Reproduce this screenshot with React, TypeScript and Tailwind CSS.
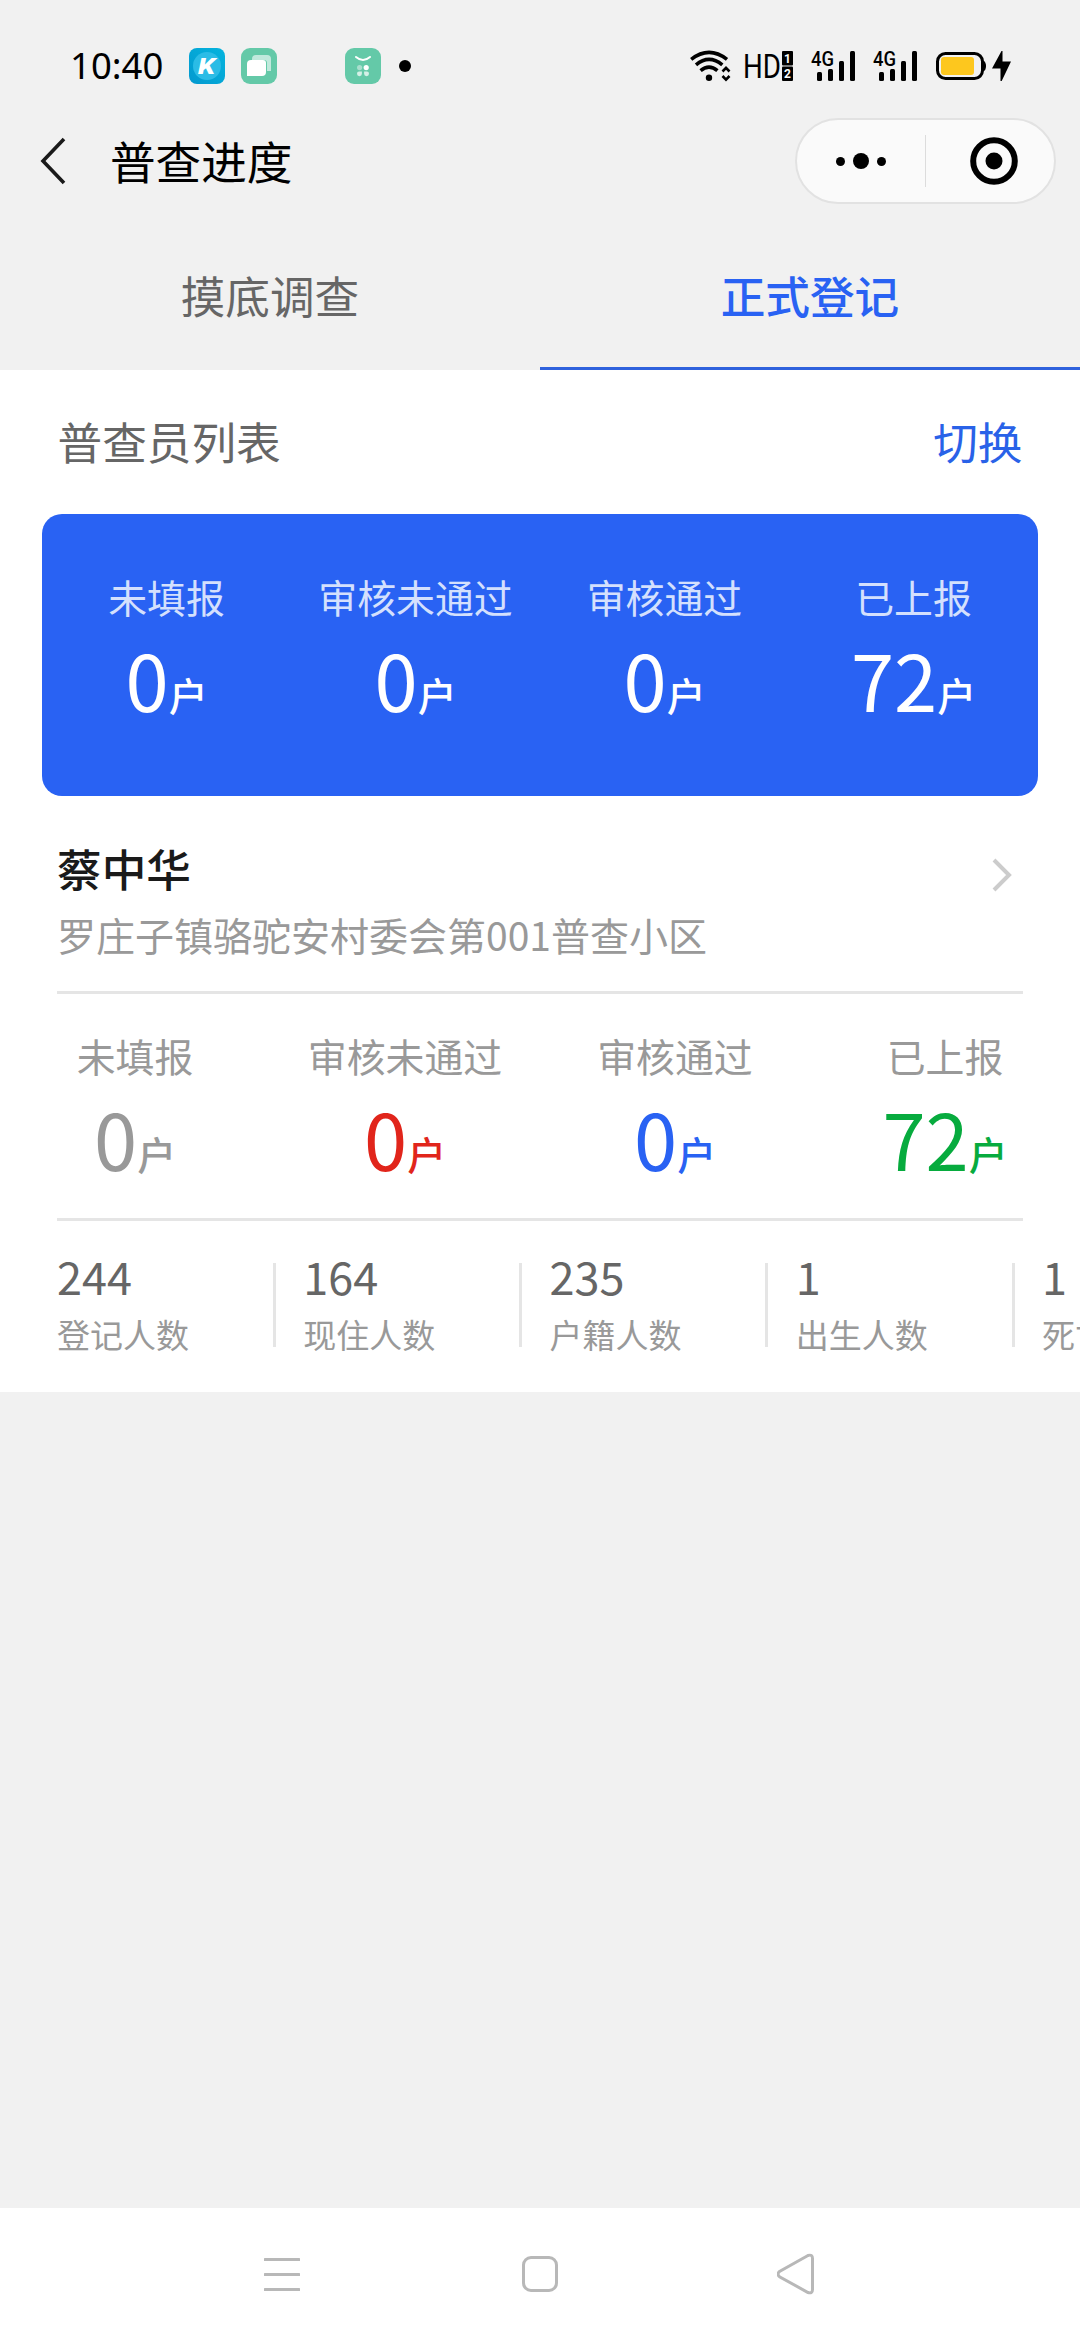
import clsx from "clsx";

const householdStats = [
  { label: "未填报", value: 0, color: "text-[#999999]" },
  { label: "审核未通过", value: 0, color: "text-[#e1251b]" },
  { label: "审核通过", value: 0, color: "text-[#2962f3]" },
  { label: "已上报", value: 72, color: "text-[#07ab3e]" },
];

const peopleStats = [
  { label: "登记人数", value: 244 },
  { label: "现住人数", value: 164 },
  { label: "户籍人数", value: 235 },
  { label: "出生人数", value: 1 },
  { label: "死亡人数", value: 1 },
];

function SignalIcon() {
  return (
    <svg className="overflow-visible" width="46" height="32" viewBox="0 0 46 32">
      <text x="0" y="15.5" fontSize="20.5" fontFamily="Roboto" fontWeight="500" textLength="23" lengthAdjust="spacingAndGlyphs">4G</text>
      <rect x="6" y="22" width="5" height="9" rx="1.5" />
      <rect x="17" y="19" width="5" height="12" rx="1.5" />
      <rect x="28" y="11" width="5" height="20" rx="1.5" />
      <rect x="39" y="1" width="5" height="30" rx="1.5" />
    </svg>
  );
}

function StatusBar() {
  return (
    <div className="flex h-[118px] items-center pt-[14px] pl-[70px] pr-[67px]">
      <span className="w-[119px] pb-[2px] font-['Noto_Sans',sans-serif] text-[36.5px] leading-none text-black">10:40</span>

      {/* Notification icons */}
      <svg width="36" height="36" viewBox="0 0 36 36">
        <defs>
          <linearGradient id="kBg" x1="0" y1="1" x2="1" y2="0">
            <stop offset="0" stopColor="#0399cf" />
            <stop offset="1" stopColor="#05b4de" />
          </linearGradient>
        </defs>
        <rect width="36" height="36" rx="8" fill="url(#kBg)" />
        <circle cx="18" cy="18" r="14" fill="#2bbce6" />
        <text x="9" y="26" fontSize="22" fontFamily="Roboto" fontWeight="900" fontStyle="italic" fill="#fff" textLength="17" lengthAdjust="spacingAndGlyphs">K</text>
      </svg>
      <svg className="ml-4" width="36" height="36" viewBox="0 0 36 36">
        <rect width="36" height="36" rx="9" fill="#64c9a8" />
        <path d="M11 11a4 4 0 0 1 4-4h11a4 4 0 0 1 4 4v12h-4V15a3 3 0 0 0-3-3H11z" fill="#c0e9dc" />
        <path d="M6 16a4 4 0 0 1 4-4h12a3 3 0 0 1 3 3v9a4 4 0 0 1-4 4H6z" fill="#fff" />
      </svg>
      <svg className="ml-[68px]" width="36" height="36" viewBox="0 0 36 36">
        <rect width="36" height="36" rx="9" fill="#64c9a8" />
        <path d="M11 9q7 6 14 0" fill="none" stroke="#fff" strokeWidth="2" strokeLinecap="round" />
        <circle cx="14.6" cy="19.6" r="2.6" fill="#a9dfce" />
        <circle cx="21.2" cy="19.6" r="2.6" fill="#fff" />
        <path d="M12 25.8a2.3 2.3 0 0 1 2.6-2.3h2.3v2.3a2.4 2.4 0 0 1-4.9 0z" fill="#d5f0e7" />
        <path d="M24 25.8a2.3 2.3 0 0 0-2.6-2.3h-2.3v2.3a2.4 2.4 0 0 0 4.9 0z" fill="#d5f0e7" />
      </svg>
      <span className="ml-[18px] size-3 rounded-full bg-black" />

      {/* System icons */}
      <div className="ml-auto flex items-center">
        <svg width="42" height="32" viewBox="0 0 42 32">
          <g fill="none" stroke="#000" strokeWidth="3.6">
            <path d="M1.2 9.3Q19-4.6 37 9.3" />
            <path d="M6 14.8Q19 3.9 32.3 14.8" />
            <path d="M10.6 20.6Q19 13.6 27.4 20.6" />
          </g>
          <circle cx="19" cy="27.8" r="3.2" />
          <path d="M32.5 21.5l3.5-3.7 3.5 3.7M32.5 26l3.5 3.7L39.5 26" fill="none" stroke="#000" strokeWidth="2.6" />
        </svg>
        <svg className="ml-3 overflow-visible" width="50" height="32" viewBox="0 0 50 32">
          <text x="-1" y="28" fontSize="33.5" fontFamily="Roboto" textLength="38" lengthAdjust="spacingAndGlyphs">HD</text>
          <rect x="38" y="1" width="11" height="14.5" rx="1" />
          <rect x="38" y="16.5" width="11" height="14.5" rx="1" />
          <text x="43.5" y="12.5" fontSize="12" fontFamily="Roboto" fontWeight="700" fill="#fff" textAnchor="middle">1</text>
          <text x="43.5" y="28" fontSize="12" fontFamily="Roboto" fontWeight="700" fill="#fff" textAnchor="middle">2</text>
        </svg>
        <div className="ml-[17px] flex gap-4">
          <SignalIcon />
          <SignalIcon />
        </div>
        <svg className="ml-[17px]" width="77" height="32" viewBox="0 0 77 32">
          <rect x="1.5" y="3.5" width="45" height="25" rx="8" fill="none" stroke="#000" strokeWidth="3" />
          <path d="M47.5 10.5q2.5 1.5 2.5 5.5t-2.5 5.5z" />
          <rect x="5" y="7" width="33" height="18" rx="3" fill="#fdc71e" />
          <path d="M65.5 1L56 18.5h8.5V31h1.2L75 11.5h-8.5V1z" />
        </svg>
      </div>
    </div>
  );
}

function NavBar() {
  return (
    <div className="flex h-[86px] items-center justify-between pr-6 pl-10">
      <div className="flex items-center">
        <svg width="26" height="48" viewBox="0 0 26 48" fill="none" stroke="#1a1a1a" strokeWidth="3.6">
          <path d="M24 2L3 24l21 22" />
        </svg>
        <h1 className="ml-11 pb-[2px] text-[45.6px] leading-[70px] text-black">普查进度</h1>
      </div>
      <div className="flex h-[86px] w-[261px] items-center rounded-full border-2 border-[#e2e2e2] bg-[#fafafa]">
        <div className="flex h-[52px] w-[129px] items-center justify-center gap-2 border-r border-[#dcdcdc]">
          <span className="size-[9px] rounded-full bg-black" />
          <span className="size-4 rounded-full bg-black" />
          <span className="size-[9px] rounded-full bg-black" />
        </div>
        <div className="flex flex-1 justify-center pl-[7px]">
          <svg width="48" height="48" viewBox="0 0 48 48">
            <circle cx="24" cy="24" r="20.8" fill="none" stroke="#000" strokeWidth="6" />
            <circle cx="24" cy="24" r="8.5" />
          </svg>
        </div>
      </div>
    </div>
  );
}

function StatItem({ label, value, labelColor, valueColor }: { label: string; value: number; labelColor: string; valueColor: string }) {
  return (
    <div className="text-center whitespace-nowrap">
      <p className={clsx("text-[38.88px] leading-[50px]", labelColor)}>{label}</p>
      <p className={clsx("h-[114px] text-[77.76px] leading-[114px]", valueColor)}>
        {value}
        <span className="align-[1px] text-[38.88px] leading-none font-medium">户</span>
      </p>
    </div>
  );
}

export default function App() {
  return (
    <div className="flex h-[2340px] w-[1080px] flex-col overflow-hidden bg-[#f1f1f1] font-['Noto_Sans_CJK_SC',sans-serif]">
      <StatusBar />
      <NavBar />

      {/* Tabs */}
      <div className="grid h-[166px] grid-cols-2 text-center text-[44.64px] leading-[67px]">
        <div className="pt-[57px] text-[#666666]">摸底调查</div>
        <div className="border-b-3 border-[#2f62dd] pt-[57px] font-medium text-[#2962f3]">正式登记</div>
      </div>

      <div className="h-[1022px] bg-white">
        <div className="flex h-[144px] items-center justify-between px-[57.6px] pb-[4px] text-[44.64px] leading-[67px]">
          <span className="text-[#666666]">普查员列表</span>
          <span className="text-[#2962e8]">切换</span>
        </div>

        {/* Totals */}
        <div className="mx-[42px] grid h-[282px] grid-cols-4 rounded-[20px] bg-[#2962f3] pt-[57px]">
          {householdStats.map((stat) => (
            <StatItem key={stat.label} label={stat.label} value={stat.value} labelColor="text-[#d4e0fd]" valueColor="text-white" />
          ))}
        </div>

        {/* Enumerator */}
        <div className="mx-[57px] h-[198px] border-b-3 border-[#e5e5e5] pt-10">
          <div className="flex h-[63px] items-center justify-between pr-[11px]">
            <h2 className="text-[44.64px] leading-[64px] font-medium text-[#1a1a1a]">蔡中华</h2>
            <svg className="mt-[14px]" width="20" height="34" viewBox="0 0 20 34" fill="none" stroke="#cccccc" strokeWidth="4">
              <path d="M2 2l15 15L2 32" />
            </svg>
          </div>
          <p className="text-[39px] leading-[70px] text-[#999999]">罗庄子镇骆驼安村委会第001普查小区</p>
        </div>

        <div className="grid h-[224px] grid-cols-4 pt-9">
          {householdStats.map((stat) => (
            <StatItem key={stat.label} label={stat.label} value={stat.value} labelColor="text-[#999999]" valueColor={stat.color} />
          ))}
        </div>
        <div className="mx-[57px] h-[3px] bg-[#e5e5e5]" />

        {/* People counts, scrolls sideways */}
        <div className="flex overflow-hidden pt-[26px] pl-[57px]">
          {peopleStats.map((stat) => (
            <div key={stat.label} className="flex w-[246.24px] shrink-0 items-center whitespace-nowrap">
              <div className="w-[216px]">
                <p className="text-[45px] leading-[58px] text-[#666666]">{stat.value}</p>
                <p className="text-[33px] leading-[58px] text-[#999999]">{stat.label}</p>
              </div>
              <div className="h-[84px] w-[3px] bg-[#e5e5e5]" />
            </div>
          ))}
        </div>
      </div>

      {/* System navigation */}
      <div className="mt-auto flex h-[132px] items-center bg-white pl-[264px]">
        <svg width="36" height="42" viewBox="0 0 36 42" fill="#b8b8b8">
          <rect y="5" width="36" height="3" rx="0.5" />
          <rect y="20" width="36" height="3" rx="0.5" />
          <rect y="35" width="36" height="3" rx="0.5" />
        </svg>
        <div className="ml-[222px] size-9 rounded-[9px] border-3 border-[#b8b8b8]" />
        <svg className="ml-[219px]" width="38" height="42" viewBox="0 0 38 42" fill="none" stroke="#b8b8b8" strokeWidth="3">
          <path d="M31 2.5L2.5 18.5Q-0.5 21 2.5 23.7L31 39.5Q35.5 41 35.5 36.5V5.5Q35.5 1 31 2.5Z" />
        </svg>
      </div>
    </div>
  );
}
